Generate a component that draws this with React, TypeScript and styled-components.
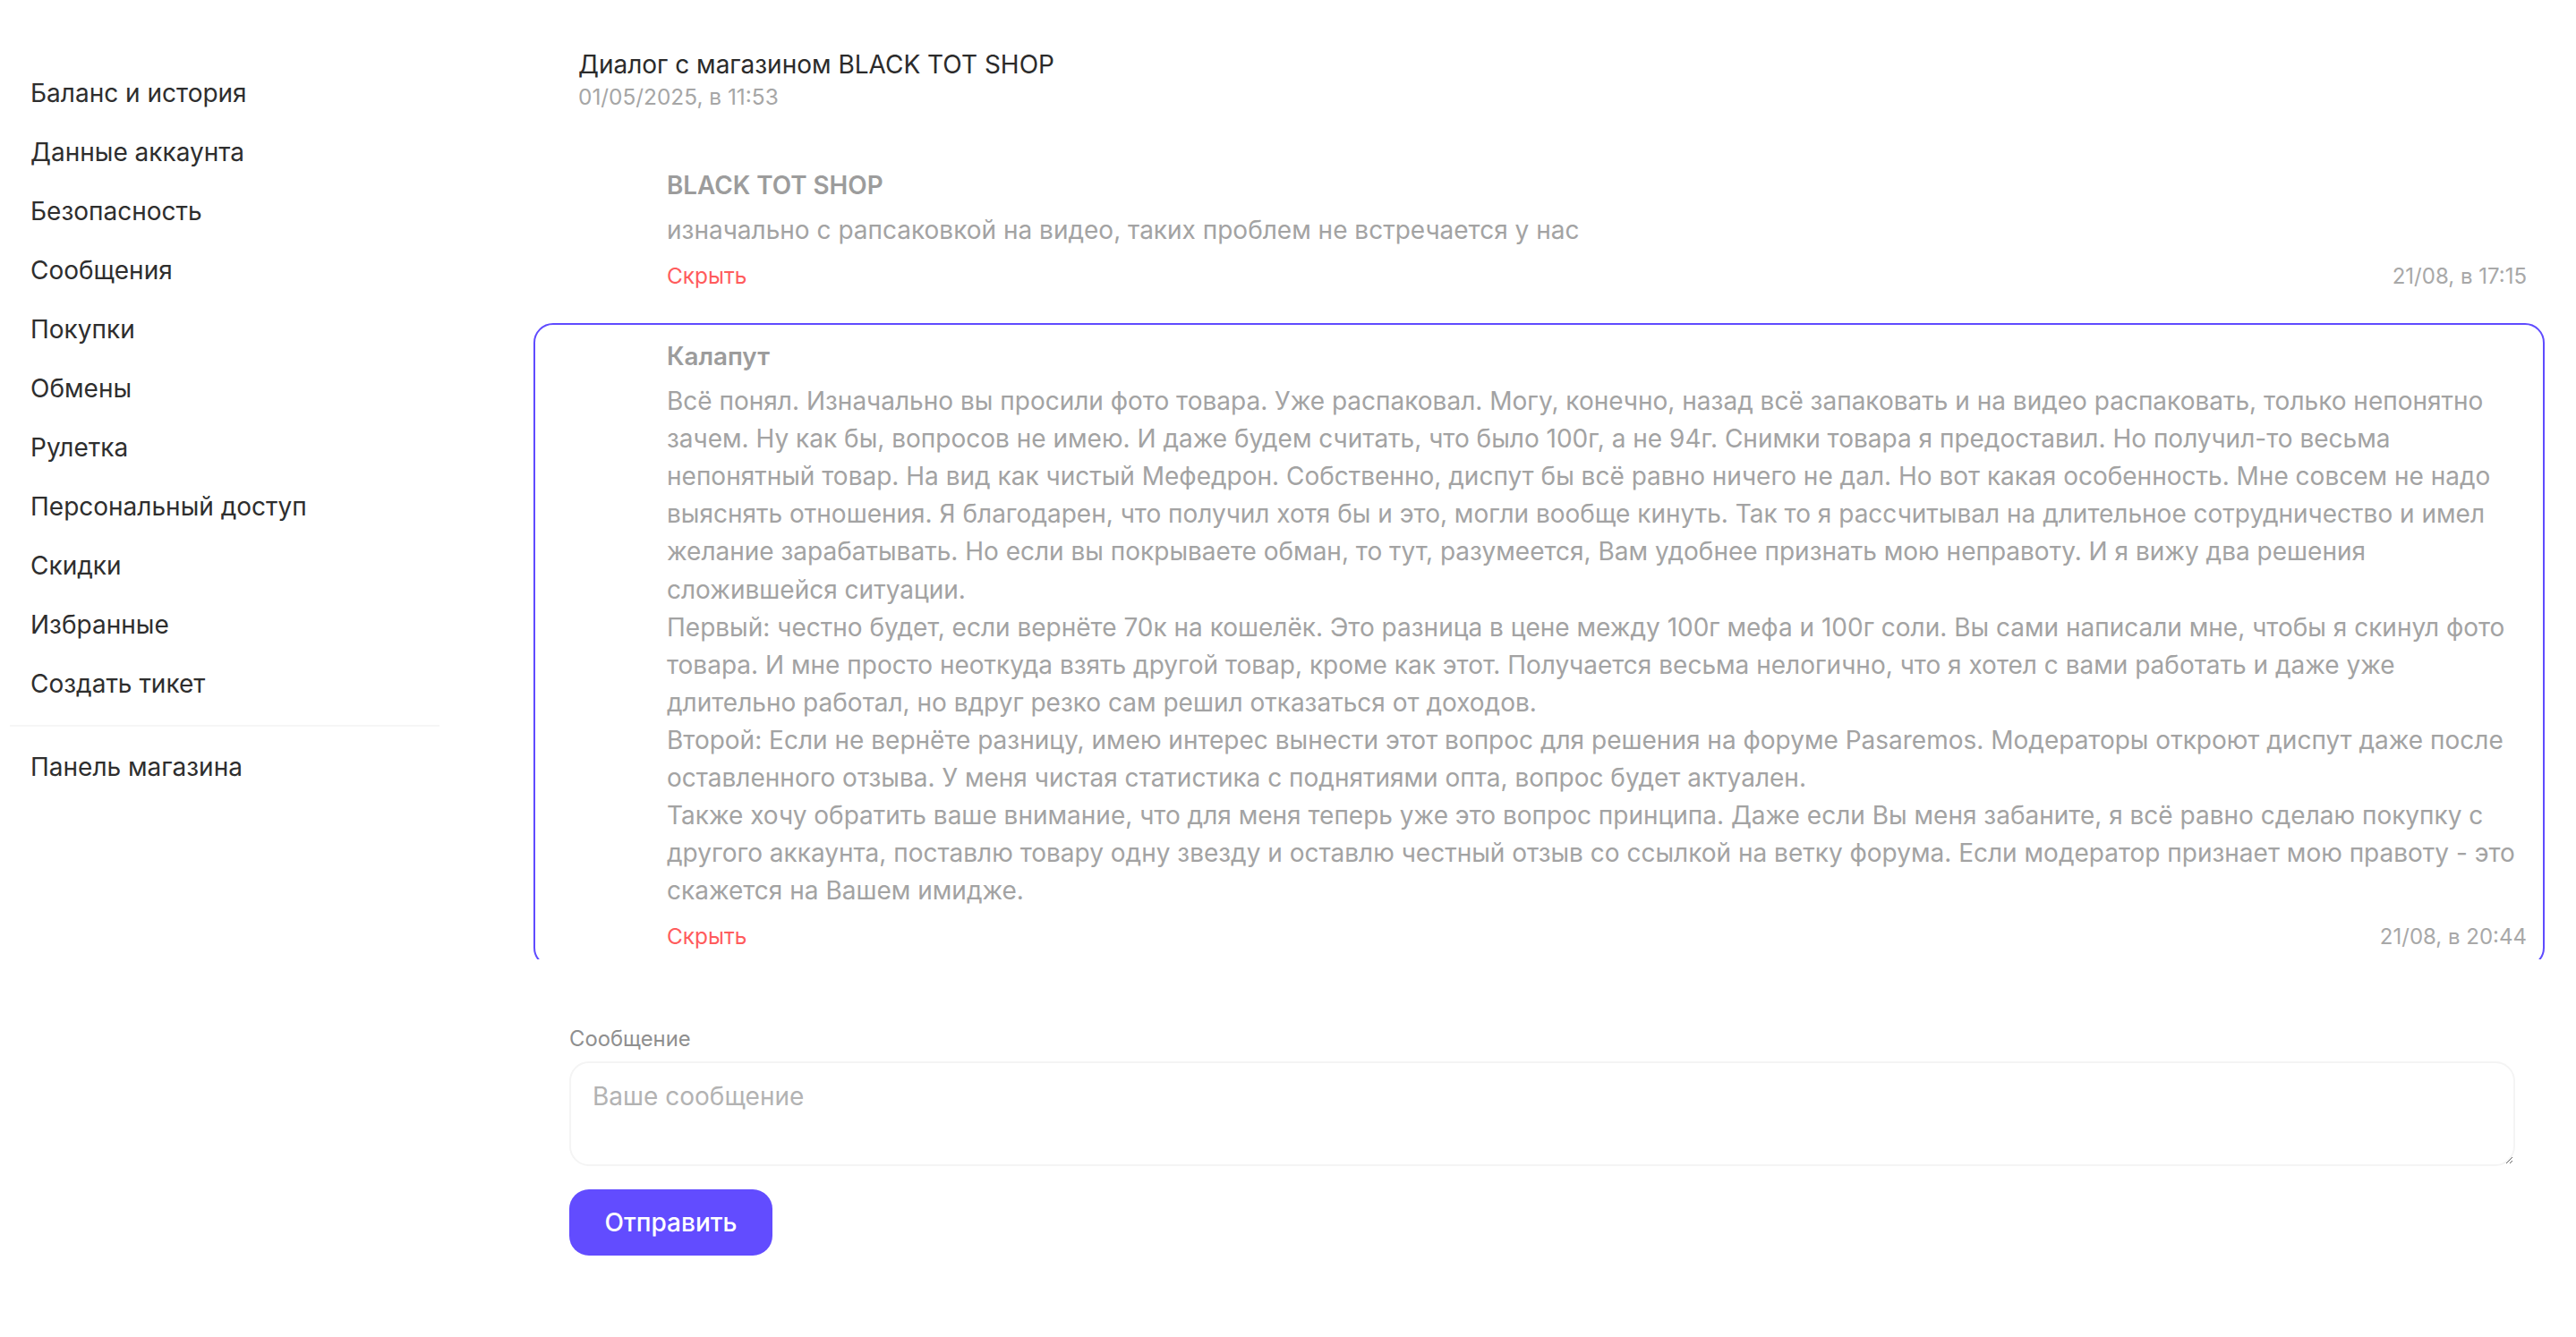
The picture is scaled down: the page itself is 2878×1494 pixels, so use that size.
import React from "react";
import styled, { createGlobalStyle } from "styled-components";

const GlobalStyle = createGlobalStyle`
  html, body {
    margin: 0;
    padding: 0;
    background: #ffffff;
    font-family: Inter, "Noto Sans", "Liberation Sans", sans-serif;
  }
  * {
    box-sizing: border-box;
  }
`;

const Page = styled.div`
  display: grid;
  grid-template-columns: 500px 1fr;
  min-height: 1494px;
`;

const Sidebar = styled.nav`
  display: flex;
  flex-direction: column;
  padding: 71px 0 0 11px;
`;

const NavItem = styled.a`
  display: block;
  height: 66px;
  line-height: 66px;
  padding-left: 23px;
  font-size: 28px;
  color: #2e2e2e;
  text-decoration: none;
  cursor: pointer;
`;

const Divider = styled.hr`
  width: 480px;
  height: 2px;
  margin: 13px 0 12px;
  border: none;
  background: #f6f6f6;
`;

const Main = styled.main`
  display: flex;
  flex-direction: column;
  padding: 54px 35px 0 96px;
`;

const Header = styled.div`
  padding-left: 50px;
`;

const Title = styled.div`
  font-size: 28px;
  line-height: 36px;
  color: #2b2b2b;
`;

const DateText = styled.div`
  font-size: 24.4px;
  line-height: 36px;
  color: #a6a6a6;
`;

const MessageList = styled.div`
  display: flex;
  flex-direction: column;
  gap: 18px;
  margin-top: 44px;
  height: 902px;
  overflow: hidden;
`;

const MessageBox = styled.div<{ $active?: boolean }>`
  flex-shrink: 0;
  border: 2px solid ${(p) => (p.$active ? "#5f4bff" : "transparent")};
  border-radius: 22px;
  padding: 17px 18px 18px 147px;
`;

const Author = styled.div`
  font-size: 27.8px;
  line-height: 36px;
  font-weight: 600;
  color: #9c9c9c;
  margin-bottom: 11px;
`;

const Body = styled.div`
  font-size: 28px;
  line-height: 42.1px;
  color: #a3a3a3;
  white-space: pre-line;
`;

const MessageFooter = styled.div`
  display: flex;
  justify-content: space-between;
  align-items: center;
  margin-top: 15px;
  height: 30px;
`;

const HideLink = styled.span`
  font-size: 24.4px;
  color: #ff5c5c;
  cursor: pointer;
`;

const Time = styled.span`
  font-size: 24px;
  color: #a8a8a8;
`;

const Form = styled.form`
  display: flex;
  flex-direction: column;
  align-items: flex-start;
  padding: 0 33px 0 40px;
  margin-top: 74px;
`;

const Label = styled.label`
  font-size: 23.8px;
  line-height: 30px;
  color: #8f8f8f;
  margin-bottom: 10px;
`;

const TextArea = styled.textarea`
  width: 100%;
  height: 117px;
  border: 2px solid #f4f4f4;
  border-radius: 22px;
  padding: 19px 24px;
  font-family: inherit;
  font-size: 28px;
  line-height: 36px;
  color: #333;
  outline: none;
  resize: vertical;

  &::placeholder {
    color: #b3b3b3;
  }
`;

const SendButton = styled.button`
  margin-top: 26px;
  width: 227px;
  height: 74px;
  border: none;
  border-radius: 22px;
  background: #624cff;
  color: #ffffff;
  font-family: inherit;
  font-size: 28px;
  font-weight: 500;
  cursor: pointer;
`;

const navItems = [
  "Баланс и история",
  "Данные аккаунта",
  "Безопасность",
  "Сообщения",
  "Покупки",
  "Обмены",
  "Рулетка",
  "Персональный доступ",
  "Скидки",
  "Избранные",
  "Создать тикет",
];

const messages = [
  {
    author: "BLACK TOT SHOP",
    text: "изначально с рапсаковкой на видео, таких проблем не встречается у нас",
    time: "21/08, в 17:15",
    active: false,
  },
  {
    author: "Калапут",
    text:
      "Всё понял. Изначально вы просили фото товара. Уже распаковал. Могу, конечно, назад всё запаковать и на видео распаковать, только непонятно зачем. Ну как бы, вопросов не имею. И даже будем считать, что было 100г, а не 94г. Снимки товара я предоставил. Но получил-то весьма непонятный товар. На вид как чистый Мефедрон. Собственно, диспут бы всё равно ничего не дал. Но вот какая особенность. Мне совсем не надо выяснять отношения. Я благодарен, что получил хотя бы и это, могли вообще кинуть. Так то я рассчитывал на длительное сотрудничество и имел желание зарабатывать. Но если вы покрываете обман, то тут, разумеется, Вам удобнее признать мою неправоту. И я вижу два решения сложившейся ситуации.\n" +
      "Первый: честно будет, если вернёте 70к на кошелёк. Это разница в цене между 100г мефа и 100г соли. Вы сами написали мне, чтобы я скинул фото товара. И мне просто неоткуда взять другой товар, кроме как этот. Получается весьма нелогично, что я хотел с вами работать и даже уже длительно работал, но вдруг резко сам решил отказаться от доходов.\n" +
      "Второй: Если не вернёте разницу, имею интерес вынести этот вопрос для решения на форуме Pasaremos. Модераторы откроют диспут даже после оставленного отзыва. У меня чистая статистика с поднятиями опта, вопрос будет актуален.\n" +
      "Также хочу обратить ваше внимание, что для меня теперь уже это вопрос принципа. Даже если Вы меня забаните, я всё равно сделаю покупку с другого аккаунта, поставлю товару одну звезду и оставлю честный отзыв со ссылкой на ветку форума. Если модератор признает мою правоту - это скажется на Вашем имидже.",
    time: "21/08, в 20:44",
    active: true,
  },
];

export default function App() {
  return (
    <>
      <GlobalStyle />
      <Page>
        <Sidebar>
          {navItems.map((item) => (
            <NavItem key={item}>{item}</NavItem>
          ))}
          <Divider />
          <NavItem>Панель магазина</NavItem>
        </Sidebar>

        <Main>
          <Header>
            <Title>Диалог с магазином BLACK TOT SHOP</Title>
            <DateText>01/05/2025, в 11:53</DateText>
          </Header>

          <MessageList>
            {messages.map((m) => (
              <MessageBox key={m.time} $active={m.active}>
                <Author>{m.author}</Author>
                <Body>{m.text}</Body>
                <MessageFooter>
                  <HideLink>Скрыть</HideLink>
                  <Time>{m.time}</Time>
                </MessageFooter>
              </MessageBox>
            ))}
          </MessageList>

          <Form onSubmit={(e) => e.preventDefault()}>
            <Label>Сообщение</Label>
            <TextArea placeholder="Ваше сообщение" />
            <SendButton type="submit">Отправить</SendButton>
          </Form>
        </Main>
      </Page>
    </>
  );
}
